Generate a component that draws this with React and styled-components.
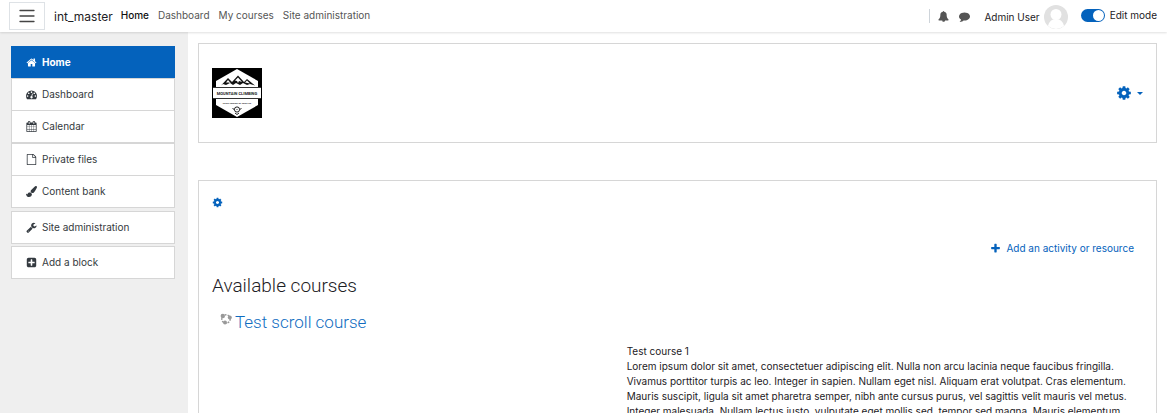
import React, { useState } from "react";
import styled, { createGlobalStyle } from "styled-components";

const icons = {
  home:
    "M1472 992v480q0 26-19 45t-45 19h-384v-384h-256v384h-384q-26 0-45-19t-19-45v-480q0-1 .5-3t.5-3l575-474 575 474q1 2 1 6zm223-69l-62 74q-8 9-21 11h-3q-13 0-21-7l-692-577-692 577q-12 8-24 7-13-2-21-11l-62-74q-8-10-7-23.5t11-21.5l719-599q32-26 76-26t76 26l244 204v-195q0-14 9-23t23-9h192q14 0 23 9t9 23v408l219 182q10 8 11 21.5t-7 23.5z",
  dashboard:
    "M384 1152q0-53-37.5-90.5t-90.5-37.5-90.5 37.5-37.5 90.5 37.5 90.5 90.5 37.5 90.5-37.5 37.5-90.5zm192-448q0-53-37.5-90.5t-90.5-37.5-90.5 37.5-37.5 90.5 37.5 90.5 90.5 37.5 90.5-37.5 37.5-90.5zm428 481l101-382q6-26-7.5-48.5t-38.5-29.5-48 6.5-30 39.5l-101 382q-60 5-107 43.5t-63 98.5q-20 77 20 146t117 89 146-20 89-117q16-60-6-117t-72-91zm660-33q0-53-37.5-90.5t-90.5-37.5-90.5 37.5-37.5 90.5 37.5 90.5 90.5 37.5 90.5-37.5 37.5-90.5zm-640-640q0-53-37.5-90.5t-90.5-37.5-90.5 37.5-37.5 90.5 37.5 90.5 90.5 37.5 90.5-37.5 37.5-90.5zm448 192q0-53-37.5-90.5t-90.5-37.5-90.5 37.5-37.5 90.5 37.5 90.5 90.5 37.5 90.5-37.5 37.5-90.5zm320 448q0 261-141 483-19 29-54 29h-1402q-35 0-54-29-141-221-141-483 0-182 71-348t191-286 286-191 348-71 348 71 286 191 191 286 71 348z",
  calendar:
    "M192 1664h288v-288h-288v288zm352 0h320v-288h-320v288zm-352-352h288v-320h-288v320zm352 0h320v-320h-320v320zm-352-384h288v-288h-288v288zm736 736h320v-288h-320v288zm-384-736h320v-288h-320v288zm768 736h288v-288h-288v288zm-384-352h320v-320h-320v320zm-352-864v-288q0-13-9.5-22.5t-22.5-9.5h-64q-13 0-22.5 9.5t-9.5 22.5v288q0 13 9.5 22.5t22.5 9.5h64q13 0 22.5-9.5t9.5-22.5zm736 864h288v-320h-288v320zm-384-384h320v-288h-320v288zm384 0h288v-288h-288v288zm32-480v-288q0-13-9.5-22.5t-22.5-9.5h-64q-13 0-22.5 9.5t-9.5 22.5v288q0 13 9.5 22.5t22.5 9.5h64q13 0 22.5-9.5t9.5-22.5zm384-64v1280q0 52-38 90t-90 38h-1408q-52 0-90-38t-38-90v-1280q0-52 38-90t90-38h128v-96q0-66 47-113t113-47h64q66 0 113 47t47 113v96h384v-96q0-66 47-113t113-47h64q66 0 113 47t47 113v96h128q52 0 90 38t38 90z",
  file:
    "M1596 380q28 28 48 76t20 88v1152q0 40-28 68t-68 28h-1344q-40 0-68-28t-28-68v-1600q0-40 28-68t68-28h896q40 0 88 20t76 48zm-444-244v376h376q-10-29-22-41l-313-313q-12-12-41-22zm384 1528v-1024h-416q-40 0-68-28t-28-68v-416h-768v1536h1280z",
  brush:
    "M1615 0q70 0 122.5 46.5t52.5 116.5q0 63-45 151-332 629-465 752-97 91-218 91-126 0-216.5-92.5t-90.5-219.5q0-128 92-212l638-579q59-54 130-54zm-909 1034q39 76 106.5 130t150.5 76l1 71q4 213-129.5 347t-348.5 134q-123 0-218-46.5t-152.5-127.5-86.5-183-29-220q7 5 41 30t62 44.5 59 36.5 46 17q41 0 55-37 25-66 57.5-112.5t69.5-76 88-47.5 103-25.5 125-10.5z",
  wrench:
    "M448 1472q0-26-19-45t-45-19-45 19-19 45 19 45 45 19 45-19 19-45zm644-420l-682 682q-37 37-90 37-52 0-91-37l-106-108q-38-36-38-90 0-53 38-91l681-681q39 98 114.5 173.5t173.5 114.5zm634-435q0 39-23 106-47 134-164.5 217.5t-258.5 83.5q-185 0-316.5-131.5t-131.5-316.5 131.5-316.5 316.5-131.5q58 0 121.5 16.5t107.5 46.5q16 11 16 28t-16 28l-293 169v224l193 107q5-3 79-48.5t135.5-81 70.5-35.5q15 0 23.5 10t8.5 25z",
  plusSquare:
    "M1408 960v-128q0-26-19-45t-45-19h-320v-320q0-26-19-45t-45-19h-128q-26 0-45 19t-19 45v320h-320q-26 0-45 19t-19 45v128q0 26 19 45t45 19h320v320q0 26 19 45t45 19h128q26 0 45-19t19-45v-320h320q26 0 45-19t19-45zm256-544v960q0 119-84.5 203.5t-203.5 84.5h-960q-119 0-203.5-84.5t-84.5-203.5v-960q0-119 84.5-203.5t203.5-84.5h960q119 0 203.5 84.5t84.5 203.5z",
  plus:
    "M1600 736v192q0 40-28 68t-68 28h-416v416q0 40-28 68t-68 28h-192q-40 0-68-28t-28-68v-416h-416q-40 0-68-28t-28-68v-192q0-40 28-68t68-28h416v-416q0-40 28-68t68-28h192q40 0 68 28t28 68v416h416q40 0 68 28t28 68z",
  cog:
    "M1152 896q0-106-75-181t-181-75-181 75-75 181 75 181 181 75 181-75 75-181zm512-109v222q0 12-8 23t-20 13l-185 28q-19 54-39 91 35 50 107 138 10 12 10 25t-9 23q-27 37-99 108t-94 71q-12 0-26-9l-138-108q-44 23-91 38-16 136-29 186-7 28-36 28h-222q-14 0-24.5-8.5t-11.5-21.5l-28-184q-49-16-90-37l-141 107q-10 9-25 9-14 0-25-11-126-114-165-168-7-10-7-23 0-12 8-23 15-21 51-66.5t54-70.5q-27-50-41-99l-183-27q-13-2-21-12.5t-8-23.5v-222q0-12 8-23t19-13l186-28q14-46 39-92-40-57-107-138-10-12-10-24 0-10 9-23 26-36 98.5-107.5t94.5-71.5q13 0 26 10l138 107q44-23 91-38 16-136 29-186 7-28 36-28h222q14 0 24.5 8.5t11.5 21.5l28 184q49 16 90 37l142-107q9-9 24-9 13 0 25 10 129 119 165 170 7 8 7 22 0 12-8 23-15 21-51 66.5t-54 70.5q26 50 41 98l183 28q13 2 21 12.5t8 23.5z",
  bell:
    "M912 1696q0-16-16-16-59 0-101.5-42.5t-42.5-101.5q0-16-16-16t-16 16q0 73 51.5 124.5t124.5 51.5q16 0 16-16zm816-288q0 52-38 90t-90 38h-448q0 106-75 181t-181 75-181-75-75-181h-448q-52 0-90-38t-38-90q50-42 91-88t85-119.5 74.5-158.5 50-206 19.5-260q0-152 117-282.5t307-158.5q-8-19-8-39 0-40 28-68t68-28 68 28 28 68q0 20-8 39 190 28 307 158.5t117 282.5q0 139 19.5 260t50 206 74.5 158.5 85 119.5 91 88z",
  comment:
    "M1792 896q0 174-120 321.5t-326 233-450 85.5q-70 0-145-8-198 175-460 242-49 14-114 22-17 2-30.5-9t-17.5-29v-1q-3-4-.5-12t2-10 4.5-9.5l6-9 7-8.5 8-9q7-8 31-34.5t34.5-38 31-39.5 32.5-51 27-59 26-76q-157-89-247.5-220t-90.5-281q0-174 120-321.5t326-233 450-85.5 450 85.5 326 233 120 321.5z"
};

const navLinks = ["Home", "Dashboard", "My courses", "Site administration"];

const drawer = [
  {
    gap: 0,
    items: [
      { title: "Home", icon: "home", active: true },
      { title: "Dashboard", icon: "dashboard" },
      { title: "Calendar", icon: "calendar" }
    ]
  },
  {
    gap: 0,
    items: [
      { title: "Private files", icon: "file" },
      { title: "Content bank", icon: "brush" }
    ]
  },
  { gap: 3, items: [{ title: "Site administration", icon: "wrench" }] },
  { gap: 2, items: [{ title: "Add a block", icon: "plusSquare" }] }
];

const Icon = ({ name, size = 11 }) => (
  <Svg width={size} height={size} viewBox="0 0 1792 1792" aria-hidden="true">
    <path d={icons[name]} />
  </Svg>
);

const MountainLogo = () => (
  <Svg width="50" height="50" viewBox="0 0 50 50" role="img">
    <rect width="50" height="50" fill="#000" />
    <path d="M25 1 46 13v24L25 49 4 37V13z" fill="#fff" />
    <path
      d="M9 17.500l7-7.500 4 4 6-6.500 6 6.500 3-3 8 6.500-5-1.500-3 1-4-2-3 2-4-2-3 2-3-2-4 2-3-1z"
      fill="#111"
    />
    <path d="M14 14.500l2-2.500 3 3.500-2-1zM23 12.500l3-3 4 4.500-3-1-1 2-1-2zM33 14.500l2-2 3 3z" fill="#fff" />
    <rect x="1" y="19" width="48" height="12" fill="#fff" />
    <path d="M1 19.500h48M1 30.500h48" stroke="#333" />
    <LogoText x="25" y="27" fontSize="4">
      MOUNTAIN CLIMBING
    </LogoText>
    <LogoText x="25" y="35.500" fontSize="2">
      GO ON JOURNEY OF YOUR LIFE
    </LogoText>
    <circle cx="25" cy="41.500" r="2.600" fill="none" stroke="#222" />
    <circle cx="25" cy="41.500" r=".6" fill="#222" />
    <path d="M20.500 40.500l2 1M29.500 40.500l-2 1M23 45l2 1.500 2-1.500" fill="none" stroke="#222" />
  </Svg>
);

const CourseIcon = () => (
  <Svg width="12" height="12" viewBox="0 0 12 12" aria-hidden="true">
    <circle cx="6" cy="6" r="4.200" fill="none" stroke="#999" strokeWidth="1.400" strokeDasharray="1.800 1.200" />
    <circle cx="2.800" cy="3" r="2.200" />
    <circle cx="9.800" cy="4.600" r="2" />
    <circle cx="5" cy="9.600" r="2" />
  </Svg>
);

export default function App() {
  const [editing, setEditing] = useState(true);

  return (
    <Page>
      <GlobalStyle />
      <Header>
        <MenuButton aria-label="Side panel">
          <Svg width="16" height="14" viewBox="0 0 16 14">
            <path d="M1 1.500h14M1 7h14M1 12.500h14" stroke="#444" strokeWidth="1.300" strokeLinecap="round" />
          </Svg>
        </MenuButton>
        <Brand href="#">int_master</Brand>
        <Nav>
          {navLinks.map((title, idx) => (
            <NavLink key={title} href="#" $active={idx === 0}>
              {title}
            </NavLink>
          ))}
        </Nav>
        <Tools>
          <ToolButton aria-label="Notifications">
            <Icon name="bell" />
          </ToolButton>
          <ToolButton aria-label="Messages">
            <Icon name="comment" />
          </ToolButton>
        </Tools>
        <UserLink href="#">
          Admin User
          <Svg width="24" height="24" viewBox="0 0 24 24" aria-hidden="true">
            <circle cx="12" cy="12" r="12" fill="#e1e1e1" />
            <circle cx="12" cy="9.500" r="5.500" fill="#fff" />
            <path d="M4 21q1-5 5-6.500h6q4 1.500 5 6.500-8 6-16 0z" fill="#fff" />
          </Svg>
        </UserLink>
        <SwitchLabel>
          <Switch
            type="checkbox"
            role="switch"
            checked={editing}
            onChange={e => setEditing(e.target.checked)}
          />
          Edit mode
        </SwitchLabel>
      </Header>
      <Body>
        <Drawer>
          {drawer.map((group, idx) => (
            <Group key={idx} $gap={group.gap}>
              {group.items.map(item => (
                <Item key={item.title}>
                  <ItemLink href="#" $active={item.active}>
                    <Icon name={item.icon} />
                    {item.title}
                  </ItemLink>
                </Item>
              ))}
            </Group>
          ))}
        </Drawer>
        <Main>
          <Banner>
            <MountainLogo />
            <SettingsButton aria-label="Settings">
              <Icon name="cog" size={16} />
              <Caret />
            </SettingsButton>
          </Banner>
          <Card>
            <SectionEdit href="#" aria-label="Edit section">
              <Icon name="cog" />
            </SectionEdit>
            <AddActivity href="#">
              <Icon name="plus" />
              Add an activity or resource
            </AddActivity>
            <Headline>Available courses</Headline>
            <Course>
              <CourseName>
                <CourseIcon />
                <CourseLink href="#">Test scroll course</CourseLink>
              </CourseName>
              <Summary>
                Test course 1<br />
                Lorem ipsum dolor sit amet, consectetuer adipiscing elit. Nulla
                non arcu lacinia neque faucibus fringilla. Vivamus porttitor
                turpis ac leo. Integer in sapien. Nullam eget nisl. Aliquam erat
                volutpat. Cras elementum. Mauris suscipit, ligula sit amet
                pharetra semper, nibh ante cursus purus, vel sagittis velit
                mauris vel metus. Integer malesuada. Nullam lectus justo,
                vulputate eget mollis sed, tempor sed magna. Mauris elementum
              </Summary>
            </Course>
          </Card>
        </Main>
      </Body>
    </Page>
  );
}

const GlobalStyle = createGlobalStyle`
  * {
    box-sizing: border-box;
  }
  body {
    margin: 0;
    background: #fff;
    color: #1d2125;
    font-family: Inter, sans-serif;
    font-size: 10px;
    line-height: 15px;
  }
  a {
    color: #0f6cbf;
    text-decoration: none;
  }
  button {
    padding: 0;
    border: 0;
    background: none;
    font: inherit;
    cursor: pointer;
  }
`;

const Svg = styled.svg`
  display: block;
  flex: none;
  fill: currentColor;
`;

const LogoText = styled.text`
  fill: #222;
  font-family: "Liberation Sans Narrow", Roboto, sans-serif;
  font-weight: 700;
  text-anchor: middle;
`;

const Page = styled.div`
  height: 100vh;
  display: flex;
  flex-direction: column;
  overflow: hidden;
`;

const Header = styled.header`
  position: relative;
  flex: none;
  height: 32px;
  padding: 0 10px 0 9px;
  display: flex;
  align-items: center;
  background: #fff;
  box-shadow: 0 1px 2px rgba(0, 0, 0, 0.12);
`;

const MenuButton = styled.button`
  width: 36px;
  height: 28px;
  display: flex;
  align-items: center;
  justify-content: center;
  && {
    border: 1px solid #dee2e6;
  }
`;

const Brand = styled.a`
  margin: 0 8px 0 9px;
  color: #1d2125;
  font-size: 12px;
`;

const Nav = styled.nav`
  margin-bottom: 2px;
  display: flex;
  gap: 9px;
`;

const NavLink = styled.a`
  color: ${props => (props.$active ? "#111" : "#555")};
  font-weight: ${props => (props.$active ? 500 : 400)};
`;

const Tools = styled.div`
  height: 14px;
  margin-left: auto;
  padding-left: 8px;
  display: flex;
  align-items: center;
  gap: 10px;
  border-left: 1px solid #ced4da;
`;

const ToolButton = styled.button`
  color: #555;
`;

const UserLink = styled.a`
  margin: 2px 13px 0 14px;
  display: flex;
  align-items: center;
  gap: 4px;
  color: #1d2125;
`;

const SwitchLabel = styled.label`
  margin-bottom: 2px;
  display: flex;
  align-items: center;
  gap: 5px;
`;

const Switch = styled.input`
  appearance: none;
  width: 24px;
  height: 13px;
  margin: 0;
  padding: 1px;
  display: flex;
  justify-content: ${props => (props.checked ? "flex-end" : "flex-start")};
  border-radius: 7px;
  background: ${props => (props.checked ? "#0462bc" : "#8f959e")};
  cursor: pointer;

  &::before {
    content: "";
    width: 11px;
    height: 11px;
    border-radius: 50%;
    background: #fff;
  }
`;

const Body = styled.div`
  flex: 1;
  min-height: 0;
  display: flex;
`;

const Drawer = styled.nav`
  flex: none;
  width: 188px;
  padding: 14px 13px 0 11px;
  background: #efefef;
`;

const Group = styled.ul`
  margin: ${props => props.$gap}px 0 0;
  padding: 0;
  list-style-type: none;
`;

const Item = styled.li`
  & + & {
    margin-top: -1px;
  }
`;

const ItemLink = styled.a`
  height: 33px;
  padding: 0 14px;
  display: flex;
  align-items: center;
  gap: 5px;
  border: 1px solid ${props => (props.$active ? "#0462bc" : "#d6d6d6")};
  background: ${props => (props.$active ? "#0462bc" : "#fff")};
  color: ${props => (props.$active ? "#fff" : "#343a40")};
  font-weight: ${props => (props.$active ? 700 : 400)};
`;

const Main = styled.main`
  flex: 1;
  min-width: 0;
  padding: 11px 10px;
`;

const Card = styled.section`
  padding: 16px 13px;
  border: 1px solid #d6d6d6;
  background: #fff;
`;

const Banner = styled(Card)`
  height: 100px;
  margin-bottom: 37px;
  display: flex;
  align-items: center;
  justify-content: space-between;
`;

const SettingsButton = styled.button`
  display: flex;
  align-items: center;
  gap: 5px;
  color: #0462bc;
`;

const Caret = styled.span`
  border: 3px solid transparent;
  border-top-color: currentColor;
  border-bottom: 0;
`;

const SectionEdit = styled.a`
  width: 11px;
  display: block;
  color: #0462bc;
`;

const AddActivity = styled.a`
  margin: 33px 9px 0 auto;
  width: max-content;
  display: flex;
  align-items: center;
  gap: 5px;
  color: #0462bc;
`;

const Headline = styled.h2`
  margin: 18px 0 0;
  font-family: Roboto, sans-serif;
  font-size: 19px;
  font-weight: 300;
  line-height: 24px;
`;

const Course = styled.article`
  padding: 12px 8px 0;
`;

const CourseName = styled.h3`
  margin: 0;
  display: flex;
  align-items: flex-start;
  gap: 3px;
  color: #999;
  font-family: Roboto, sans-serif;
  font-size: 17px;
  font-weight: 300;
  line-height: 24px;

  svg {
    margin-top: 3px;
  }
`;

const CourseLink = styled.a`
  color: #0f6cbf;
`;

const Summary = styled.p`
  width: calc(100% * 5 / 9);
  margin: 10px 0 0 auto;
`;
